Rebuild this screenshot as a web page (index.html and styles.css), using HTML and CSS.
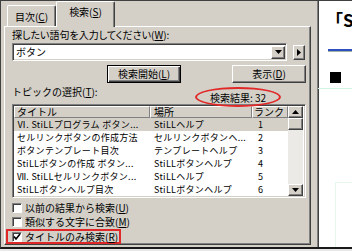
FILE: index.html
```
<!DOCTYPE html>
<html lang="ja">
<head>
<meta charset="utf-8">
<link rel="stylesheet" href="styles.css">
</head>
<body>
<div class="win">
  <div class="left">
    <div class="tabs">
      <div class="tab t1">目次(<u>C</u>)</div>
      <div class="tab active">検索(<u>S</u>)</div>
    </div>
    <div class="panel">
      <div class="lbl">探したい語句を入力してください(<u>W</u>):</div>
      <div class="combo-row">
        <div class="combo">
          <span class="ctext">ボタン</span>
          <span class="ddbtn raised"><svg width="7" height="4" viewBox="0 0 7 4"><polygon points="0,0 7,0 3.5,4" fill="#000"/></svg></span>
        </div>
        <div class="sbtn raised"><svg width="4" height="7" viewBox="0 0 4 7"><polygon points="0,0 4,3.5 0,7" fill="#000"/></svg></div>
      </div>
      <div class="btn-row">
        <div class="btn default">検索開始(<u>L</u>)</div>
        <div class="btn raised">表示(<u>D</u>)</div>
      </div>
      <div class="topic-row">
        <span class="tlabel">トピックの選択(<u>T</u>):</span>
        <span class="result">検索結果: 32</span>
      </div>
      <div class="list">
        <div class="lmain">
          <div class="hdr">
            <div class="hc c1">タイトル</div>
            <div class="hc c2">場所</div>
            <div class="hc c3">ランク</div>
          </div>
          <div class="row sel"><div class="c1">Ⅵ. StiLLプログラム ボタン...</div><div class="c2">StiLLヘルプ</div><div class="c3">1</div></div>
          <div class="row"><div class="c1">セルリンクボタンの作成方法</div><div class="c2">セルリンクボタンヘ...</div><div class="c3">2</div></div>
          <div class="row"><div class="c1">ボタンテンプレート目次</div><div class="c2">テンプレートヘルプ</div><div class="c3">3</div></div>
          <div class="row"><div class="c1">StiLLボタンの作成 ボタン...</div><div class="c2">StiLLボタンヘルプ</div><div class="c3">4</div></div>
          <div class="row"><div class="c1">Ⅶ. StiLLセルリンクボタン...</div><div class="c2">StiLLヘルプ</div><div class="c3">5</div></div>
          <div class="row"><div class="c1">StiLLボタンヘルプ目次</div><div class="c2">StiLLボタンヘルプ</div><div class="c3">6</div></div>
        </div>
        <div class="vscroll">
          <div class="sbb raised"><svg width="7" height="4" viewBox="0 0 7 4"><polygon points="3.5,0 7,4 0,4" fill="#000"/></svg></div>
          <div class="thumb raised"></div>
          <div class="track"></div>
          <div class="sbb raised"><svg width="7" height="4" viewBox="0 0 7 4"><polygon points="0,0 7,0 3.5,4" fill="#000"/></svg></div>
        </div>
      </div>
      <div class="checks">
        <div class="chk"><span class="box"></span><span>以前の結果から検索(<u>U</u>)</span></div>
        <div class="chk"><span class="box"></span><span>類似する文字に合致(<u>M</u>)</span></div>
        <div class="chk marked"><span class="box"><svg width="8" height="8" viewBox="0 0 8 8"><polyline points="1,3.5 3,6 7,1" fill="none" stroke="#000" stroke-width="1.6"/></svg></span><span>タイトルのみ検索(<u>R</u>)</span></div>
      </div>
    </div>
  </div>
  <div class="split"></div>
  <div class="pane">
    <div class="ptitle">「StiLL</div>
    <div class="prule"></div>
    <div class="psq"></div>
    <div class="pline"></div>
    <div class="pgrid"></div>
  </div>
</div>
</body>
</html>
```
FILE: styles.css
```
* { box-sizing: border-box; }
body {
  margin: 0;
  background: #e8e8e8;
  font-family: "Noto Sans CJK JP", "Noto Sans", sans-serif;
  font-size: 10px;
  line-height: 12px;
  color: #000;
}
u { text-decoration: underline; text-underline-offset: 1px; }
.win {
  width: 352px;
  height: 249px;
  display: flex;
  background: #d4d0c8;
  border-left: 1px solid #404040;
  border-top: 1px solid #404040;
  border-bottom: 2px solid #1a1a1a;
  overflow: hidden;
}
.raised {
  background: #d4d0c8;
  border-top: 1px solid #fff;
  border-left: 1px solid #fff;
  border-right: 1px solid #404040;
  border-bottom: 1px solid #404040;
  box-shadow: inset -1px -1px #808080;
}
.left {
  width: 310px;
  flex: none;
  padding-left: 3px;
  display: flex;
  flex-direction: column;
}
.tabs {
  height: 25px;
  display: flex;
  align-items: flex-end;
  padding-left: 3px;
  position: relative;
  z-index: 2;
}
.tab {
  height: 21px;
  border-top: 1px solid #fff;
  border-left: 1px solid #fff;
  border-right: 1px solid #404040;
  box-shadow: inset -1px 0 #808080;
  border-radius: 2px 2px 0 0;
  padding-top: 5px;
  text-align: center;
  background: #d4d0c8;
}
.t1 { width: 49px; }
.tab.active {
  width: 59px;
  height: 26px;
  margin-bottom: -1px;
  padding-top: 4px;
}
.panel {
  height: 219px;
  border-top: 1px solid #fff;
  border-left: 1px solid #fff;
  border-right: 1px solid #404040;
  border-bottom: 1px solid #404040;
  box-shadow: inset -1px -1px #808080;
  padding: 2px 4px 0 7px;
  display: flex;
  flex-direction: column;
}
.lbl { height: 12px; font-feature-settings: "palt"; white-space: nowrap; }
.combo-row { display: flex; margin-top: 2px; height: 18px; }
.combo {
  width: 275px;
  height: 18px;
  background: #fff;
  border-top: 1px solid #808080;
  border-left: 1px solid #808080;
  border-right: 1px solid #fff;
  border-bottom: 1px solid #fff;
  box-shadow: inset 1px 1px #404040, inset -1px -1px #d4d0c8;
  display: flex;
  align-items: center;
  padding: 0 1px 0 3px;
}
.ctext { flex: 1; }
.ddbtn {
  width: 14px;
  height: 13px;
  display: flex;
  align-items: center;
  justify-content: center;
}
.sbtn {
  width: 12px;
  height: 15px;
  margin-left: 6px;
  margin-top: 2px;
  display: flex;
  align-items: center;
  justify-content: center;
}
.btn-row { display: flex; margin-top: 4px; height: 18px; }
.btn {
  width: 74px;
  height: 18px;
  text-align: center;
  padding-top: 2px;
  margin-left: auto;
}
.btn.default {
  margin-left: 95px;
  margin-right: 0;
  border: 1px solid #000;
  background: #d4d0c8;
  box-shadow: inset 1px 1px #fff, inset -1px -1px #404040, inset -2px -2px #808080;
}
.topic-row { display: flex; height: 21px; align-items: flex-start; }
.tlabel { margin-top: 3px; white-space: nowrap; }
.result {
  margin-left: auto;
  margin-right: 25px;
  margin-top: 4px;
  width: 86px;
  height: 20px;
  border: 2px solid #e02828;
  border-radius: 50%;
  text-align: center;
  padding-top: 3px;
  position: relative;
  z-index: 1;
}
.list {
  display: flex;
  height: 94px;
  background: #fff;
  border-top: 1px solid #808080;
  border-left: 1px solid #808080;
  border-right: 1px solid #fff;
  border-bottom: 1px solid #fff;
  box-shadow: inset 1px 1px #404040, inset -1px -1px #d4d0c8;
  padding: 1px;
}
.lmain { width: 274px; flex: none; }
.hdr { display: flex; height: 12px; }
.hc {
  height: 12px;
  line-height: 10px;
  background: #d4d0c8;
  border-top: 1px solid #fff;
  border-left: 1px solid #fff;
  border-right: 1px solid #808080;
  border-bottom: 1px solid #808080;
  white-space: nowrap;
}
.c1 { width: 136px; padding-left: 2px; }
.c2 { width: 102px; padding-left: 3px; }
.c3 { width: 36px; padding-left: 1px; }
.row {
  display: flex;
  height: 13px;
  line-height: 13px;
  font-size: 9px;
  letter-spacing: 0.3px;
  white-space: nowrap;
}
.row > div { overflow: hidden; }
.row .c1 { padding-left: 3px; }
.row .c2 { padding-left: 4px; }
.row .c3 { padding-left: 6px; font-size: 9px; }
.row.sel { background: #d4d0c8; }
.vscroll {
  width: 15px;
  flex: none;
  display: flex;
  flex-direction: column;
  background: #eceae6;
}
.sbb {
  height: 12px;
  display: flex;
  align-items: center;
  justify-content: center;
}
.thumb { height: 12px; }
.track { flex: 1; }
.checks { margin-top: 3px; display: flex; flex-direction: column; }
.chk { display: flex; align-items: center; height: 14px; white-space: nowrap; }
.box {
  width: 10px;
  height: 10px;
  margin-right: 3px;
  background: #fff;
  border-top: 1px solid #808080;
  border-left: 1px solid #808080;
  border-right: 1px solid #fff;
  border-bottom: 1px solid #fff;
  box-shadow: inset 1px 1px #404040;
  display: flex;
  align-items: center;
  justify-content: center;
}
.chk.marked {
  width: 115px;
  height: 15px;
  margin-left: -6px;
  padding-left: 4px;
  border: 2px solid #e02828;
}
.split { width: 6px; flex: none; }
.pane {
  flex: 1;
  background: #fff;
  border-left: 1px solid #808080;
  box-shadow: inset 1px 0 #404040;
  display: flex;
  flex-direction: column;
  overflow: hidden;
}
.ptitle {
  margin-top: 9px;
  padding-left: 8px;
  font-size: 17px;
  line-height: 20px;
  font-weight: bold;
  white-space: nowrap;
}
.prule {
  margin-top: 19px;
  margin-left: 10px;
  height: 3px;
  border-top: 2px solid #2f4fbf;
  border-bottom: 1px solid #9fb3a8;
}
.psq {
  margin-top: 20px;
  margin-left: 12px;
  width: 11px;
  height: 11px;
  background: #000;
}
.pline {
  margin-top: 5px;
  height: 1px;
  background: #d2f5e2;
}
.pgrid {
  margin-top: 93px;
  margin-left: 17px;
  flex: 1;
  border-top: 1px solid #e6f7ec;
  border-left: 1px solid #e6f7ec;
}
```
